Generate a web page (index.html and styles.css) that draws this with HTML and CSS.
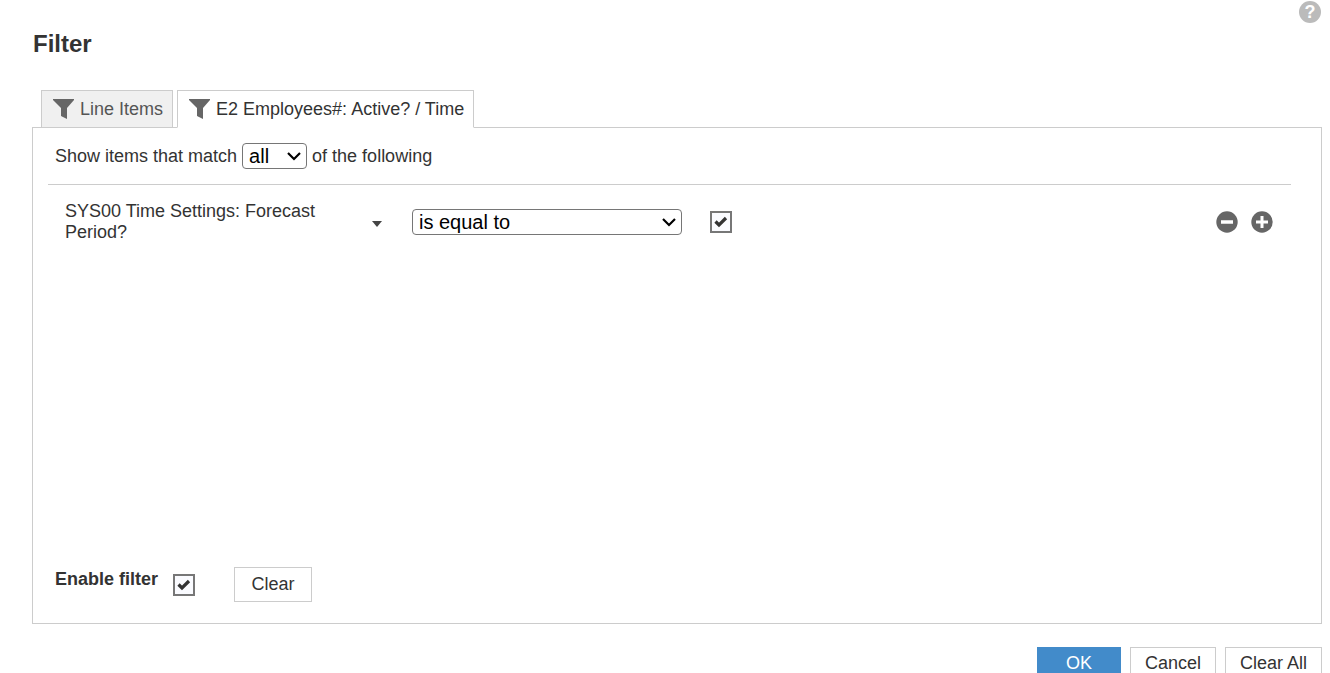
FILE: index.html
```html
<!DOCTYPE html>
<html lang="en">
<head>
<meta charset="UTF-8">
<meta name="viewport" content="width=device-width, initial-scale=1.0">
<title>Filter</title>
<link rel="stylesheet" href="styles.css">
</head>
<body>
<button type="button" class="help" aria-label="Help">?</button>
<main class="dialog">
<h1>Filter</h1>
<div class="tabs" role="tablist">
<button type="button" class="tab" role="tab" aria-selected="false">
<svg width="21" height="20" viewBox="0 0 21 20"><path d="M0 0H21V1L14 9V20L8 17V9L0 1Z" fill="#666"/></svg>
Line Items
</button>
<button type="button" class="tab active" role="tab" aria-selected="true">
<svg width="21" height="20" viewBox="0 0 21 20"><path d="M0 0H21V1L14 9V20L8 17V9L0 1Z" fill="#666"/></svg>
E2 Employees#: Active? / Time
</button>
</div>
<form class="panel">
<div class="match">
<label for="matchType">Show items that match</label>
<select id="matchType" class="match-type">
<option>all</option>
<option>any</option>
</select>
<span>of the following</span>
</div>
<div class="conditions">
<div class="condition">
<button type="button" class="field">
<span>SYS00 Time Settings: Forecast Period?</span>
<svg width="10" height="10" viewBox="0 0 10 10"><path d="M0 4H10L5 10Z" fill="#444"/></svg>
</button>
<select class="operator" aria-label="Operator">
<option>is equal to</option>
<option>is not equal to</option>
</select>
<input type="checkbox" class="check" aria-label="Value" checked>
<div class="row-actions">
<button type="button" class="icon-btn" aria-label="Remove condition">
<svg width="22" height="22" viewBox="0 0 22 22"><circle cx="11" cy="11" r="10.700" fill="#666"/><path d="M5 11H17" stroke="#fff" stroke-width="3.500"/></svg>
</button>
<button type="button" class="icon-btn" aria-label="Add condition">
<svg width="22" height="22" viewBox="0 0 22 22"><circle cx="11" cy="11" r="10.700" fill="#666"/><path d="M5 11H17M11 5V17" stroke="#fff" stroke-width="3"/></svg>
</button>
</div>
</div>
</div>
<div class="panel-footer">
<label for="enableFilter">Enable filter</label>
<input type="checkbox" id="enableFilter" class="check" checked>
<button type="button" class="btn clear">Clear</button>
</div>
</form>
<div class="buttons">
<button type="button" class="btn primary">OK</button>
<button type="button" class="btn">Cancel</button>
<button type="button" class="btn">Clear All</button>
</div>
</main>
</body>
</html>
```

FILE: styles.css
```css
* {
box-sizing: border-box;
}
html {
overflow: hidden;
}
body {
margin: 0;
background-color: #fff;
color: #333;
font-family: "Liberation Sans", Arial, sans-serif;
font-size: 18px;
line-height: 21px;
}
button {
font: inherit;
color: inherit;
cursor: pointer;
}
svg {
display: block;
flex: none;
}
.help {
position: absolute;
top: 1px;
right: 9px;
width: 22px;
height: 22px;
padding: 0;
border: none;
border-radius: 50%;
background-color: #bbb;
color: #fff;
font-size: 18px;
font-weight: bold;
line-height: 22px;
}
.dialog {
padding: 30px 8px 0 32px;
}
h1 {
margin: 0 0 32px 1px;
font-size: 24px;
line-height: 28px;
}
.tabs {
display: flex;
gap: 4px;
margin: 0 0 -1px 9px;
}
.tab {
display: flex;
align-items: center;
gap: 6px;
height: 38px;
padding: 0 9px 0 11px;
border: 1px solid #ccc;
background-color: #f0f0f0;
color: #555;
}
.tab.active {
border-bottom-color: #fff;
background-color: #fff;
color: #333;
z-index: 1;
}
.panel {
border: 1px solid #ccc;
padding: 15px 30px 21px 15px;
}
.match {
display: flex;
align-items: center;
gap: 5px;
padding: 0 0 15px 7px;
border-bottom: 1px solid #ccc;
}
select {
appearance: none;
height: 26px;
padding: 0 24px 0 6px;
border: 1px solid #767676;
border-radius: 4px;
background: #fff url("data:image/svg+xml,%3Csvg xmlns='http://www.w3.org/2000/svg' width='14' height='10' viewBox='0 0 14 10'%3E%3Cpath d='M1 2L7 8L13 2' fill='none' stroke='%23000' stroke-width='2.200'/%3E%3C/svg%3E") no-repeat right 5px center;
color: #000;
font-family: inherit;
font-size: 20px;
}
.match-type {
width: 65px;
}
.operator {
width: 270px;
}
.conditions {
min-height: 382px;
padding: 16px 18px 0 17px;
}
.condition {
display: flex;
align-items: center;
}
.field {
display: flex;
align-items: center;
justify-content: space-between;
width: 317px;
margin-right: 30px;
padding: 0;
border: none;
background: none;
text-align: left;
}
.field span {
width: 260px;
}
.check {
appearance: none;
width: 22px;
height: 22px;
margin: 0;
border: 2px solid #777;
background-color: #fafbff;
}
.check:checked {
background-image: url("data:image/svg+xml,%3Csvg xmlns='http://www.w3.org/2000/svg' viewBox='0 0 18 18'%3E%3Cpath d='M3.500 8.500L7 12L14 5' fill='none' stroke='%23333' stroke-width='3.200'/%3E%3C/svg%3E");
}
.condition .check {
margin-left: 28px;
}
.row-actions {
display: flex;
gap: 13px;
margin-left: auto;
}
.icon-btn {
padding: 0;
border: none;
background: none;
}
.panel-footer {
display: flex;
align-items: center;
padding-left: 7px;
}
.panel-footer label {
margin-right: 15px;
padding-bottom: 10px;
font-weight: bold;
}
.btn {
height: 33px;
padding: 0 14px;
border: 1px solid #ccc;
background-color: #fff;
}
.clear {
width: 78px;
height: 35px;
margin-left: 39px;
}
.buttons {
display: flex;
justify-content: flex-end;
gap: 9px;
margin-top: 23px;
}
.primary {
padding: 0 28px;
border-color: #428bca;
background-color: #428bca;
color: #fff;
}
```
